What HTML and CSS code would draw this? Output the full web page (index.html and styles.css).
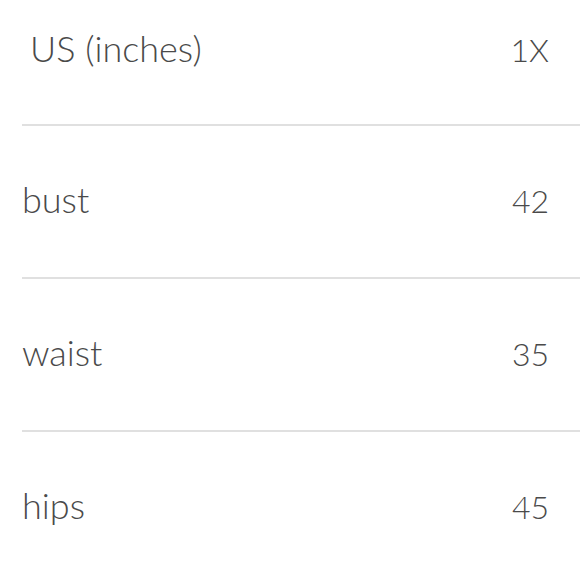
FILE: index.html
```html
<!DOCTYPE html>
<html>
<head>
<meta charset="utf-8">
<link rel="stylesheet" href="styles.css">
</head>
<body>
<div class="size-table">
  <div class="row row-head">
    <span class="label">US (inches)</span>
    <span class="value">1X</span>
  </div>
  <div class="row">
    <span class="label">bust</span>
    <span class="value">42</span>
  </div>
  <div class="row">
    <span class="label">waist</span>
    <span class="value">35</span>
  </div>
  <div class="row row-last">
    <span class="label">hips</span>
    <span class="value">45</span>
  </div>
</div>
</body>
</html>
```
FILE: styles.css
```css
html, body {
  margin: 0;
  padding: 0;
  background: #ffffff;
}

.size-table {
  width: 580px;
  height: 580px;
  padding-left: 22px;
  box-sizing: border-box;
  font-family: "Lato", "DejaVu Sans", sans-serif;
  font-weight: 300;
  color: #4a4a4a;
  overflow: hidden;
}

.row {
  display: flex;
  justify-content: space-between;
  align-items: baseline;
  height: 153px;
  line-height: 40px;
  padding: 53px 31px 0 0;
  box-sizing: border-box;
  border-bottom: 2px solid #e0e0e0;
}

.row-head {
  height: 126px;
  padding-top: 28px;
}

.row-head .label {
  padding-left: 8px;
}

.row-last {
  border-bottom: none;
}

.label {
  font-size: 36px;
}

.value {
  font-size: 32px;
  text-align: right;
}
```
